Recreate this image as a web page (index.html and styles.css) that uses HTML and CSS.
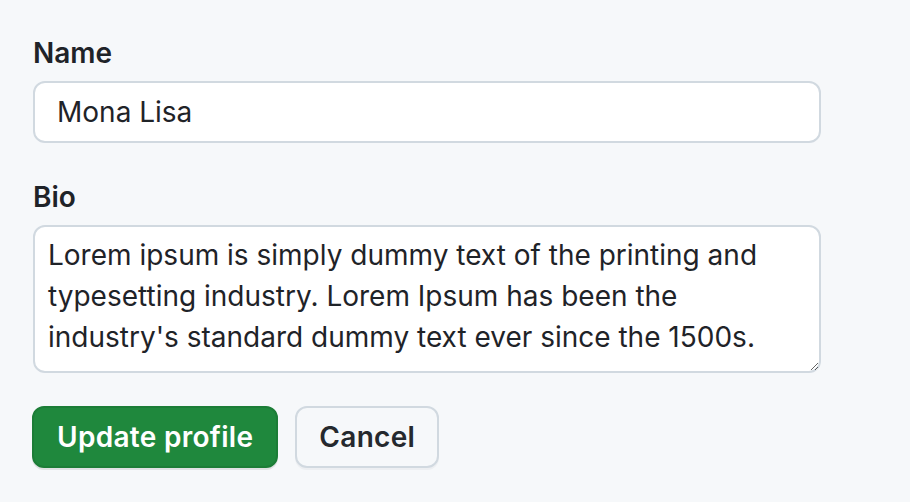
FILE: index.html
```html
<!DOCTYPE html>
<html>
<head>
<meta charset="utf-8">
<link rel="stylesheet" href="styles.css">
</head>
<body>
<form class="form">
  <div class="group">
    <label class="label" for="name">Name</label>
    <input class="input" id="name" type="text" value="Mona Lisa">
  </div>
  <div class="group">
    <label class="label" for="bio">Bio</label>
    <textarea class="textarea" id="bio">Lorem ipsum is simply dummy text of the printing and typesetting industry. Lorem Ipsum has been the industry's standard dummy text ever since the 1500s.</textarea>
  </div>
  <div class="actions">
    <button type="button" class="btn btn-primary">Update profile</button>
    <button type="button" class="btn btn-default">Cancel</button>
  </div>
</form>
</body>
</html>
```
FILE: styles.css
```css
html, body {
  margin: 0;
  background: #f6f8fa;
}
body {
  padding: 33px;
  font-family: Inter, "Noto Sans", sans-serif;
  color: #1f2328;
}
.form {
  width: 788px;
  display: flex;
  flex-direction: column;
  gap: 34px;
}
.group {
  display: flex;
  flex-direction: column;
  gap: 8px;
}
.label {
  font-size: 28px;
  font-weight: 600;
  line-height: 40px;
}
.input, .textarea {
  box-sizing: border-box;
  width: 788px;
  margin: 0;
  border: 2px solid #d1d9e0;
  border-radius: 12px;
  background: #fff;
  font-family: inherit;
  color: #1f2328;
  font-size: 28px;
  outline: none;
}
.input {
  height: 62px;
  padding: 0 22px;
}
.textarea {
  height: 148px;
  padding: 8px 13px;
  line-height: 41px;
  resize: vertical;
  display: block;
}
.actions {
  display: flex;
  gap: 17px;
  margin-top: -1px;
  margin-left: -1px;
}
.btn {
  height: 62px;
  padding: 0 23px;
  border: 2px solid #d1d9e0;
  border-radius: 12px;
  background: #f6f8fa;
  color: #25292e;
  font-family: inherit;
  font-size: 28px;
  font-weight: 600;
  letter-spacing: 0.3px;
  box-shadow: 0 2px 0 rgba(31, 35, 40, 0.04);
}
.btn-default {
  padding: 0 22px;
}
.btn-primary {
  background: #1f883d;
  border-color: #1c7d37;
  color: #fff;
  box-shadow: 0 2px 0 rgba(31, 35, 40, 0.1);
}
```
